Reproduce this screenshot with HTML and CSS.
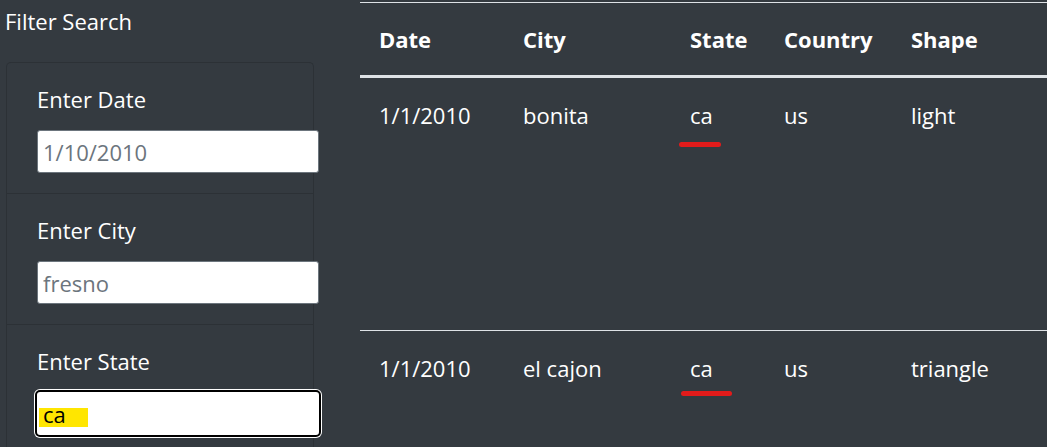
FILE: index.html
```html
<!DOCTYPE html>
<html lang="en">
<head>
<meta charset="utf-8">
<title>UFO Sightings</title>
<link rel="stylesheet" href="styles.css">
</head>
<body>
<div class="layout">
  <aside class="filters">
    <h2 class="filters-title">Filter Search</h2>
    <ul class="filter-list">
      <li class="filter-item">
        <label class="filter-label" for="date">Enter Date</label>
        <input class="filter-input" id="date" type="text" placeholder="1/10/2010">
      </li>
      <li class="filter-item">
        <label class="filter-label" for="city">Enter City</label>
        <input class="filter-input" id="city" type="text" placeholder="fresno">
      </li>
      <li class="filter-item">
        <label class="filter-label" for="state">Enter State</label>
        <input class="filter-input filter-input-focus" id="state" type="text" value="ca">
      </li>
    </ul>
  </aside>
  <main class="results">
    <table class="ufo-table">
      <colgroup>
        <col class="c-date"><col class="c-city"><col class="c-state"><col class="c-country"><col class="c-shape">
      </colgroup>
      <thead>
        <tr><th>Date</th><th>City</th><th>State</th><th>Country</th><th>Shape</th></tr>
      </thead>
      <tbody>
        <tr class="row-tall">
          <td>1/1/2010</td><td>bonita</td><td><span class="mark mark-a">ca</span></td><td>us</td><td>light</td>
        </tr>
        <tr class="row-tall">
          <td>1/1/2010</td><td>el cajon</td><td><span class="mark mark-b">ca</span></td><td>us</td><td>triangle</td>
        </tr>
      </tbody>
    </table>
  </main>
</div>
</body>
</html>
```
FILE: styles.css
```css
* { box-sizing: border-box; }
html, body {
  margin: 0;
  padding: 0;
  background: #343a40;
  color: #ffffff;
  font-family: "Open Sans", "Noto Sans", sans-serif;
  overflow: hidden;
  height: 447px;
}
.layout {
  display: grid;
  grid-template-columns: 360px 1fr;
  width: 1047px;
}
.filters {
  padding: 0 0 0 5px;
}
.filters-title {
  margin: 0;
  font-size: 22px;
  font-weight: 400;
  line-height: 30px;
  padding-top: 6px;
  height: 62px;
}
.filter-list {
  list-style: none;
  margin: 0 0 0 1px;
  padding: 0;
  width: 308px;
  border: 1px solid #2c3136;
  border-bottom: none;
  border-radius: 5px 5px 0 0;
}
.filter-item {
  padding: 21px 0 19px 30px;
  border-bottom: 1px solid #2c3136;
  height: 131px;
}
.filter-label {
  display: block;
  font-size: 22px;
  line-height: 30px;
  margin-bottom: 16px;
}
.filter-input {
  display: block;
  width: 282px;
  height: 43px;
  padding: 0 5px;
  border: 1px solid #6c757d;
  border-radius: 3px;
  background: #ffffff;
  font-family: "Open Sans", "Noto Sans", sans-serif;
  font-size: 22px;
  color: #000000;
}
.filter-input::placeholder { color: #6c757d; opacity: 1; }
.filter-input-focus {
  outline: 2px solid #000000;
  box-shadow: 0 0 0 3px #ffffff;
  border-color: #ffffff;
  background: linear-gradient(#ffe600, #ffe600) 1px 15px / 49px 19px no-repeat, #ffffff;
}
.results {
  padding-top: 2px;
}
.ufo-table {
  width: 100%;
  border-collapse: collapse;
  table-layout: fixed;
  border-top: 1px solid #dee2e6;
  font-size: 22px;
}
.c-date { width: 144px; }
.c-city { width: 167px; }
.c-state { width: 94px; }
.c-country { width: 127px; }
.ufo-table th {
  text-align: left;
  font-weight: 700;
  line-height: 30px;
  padding: 21px 19px 21px;
  border-bottom: 3px solid #dee2e6;
}
.ufo-table td {
  vertical-align: top;
  line-height: 30px;
  padding: 22px 19px 0;
  border-bottom: 1px solid #dee2e6;
}
.row-tall { height: 254px; }
.mark { position: relative; }
.mark::after {
  content: "";
  position: absolute;
  height: 5px;
  border-radius: 3px;
  background: #e21b1b;
}
.mark-a::after { left: -11px; width: 42px; top: 42px; }
.mark-b::after { left: -9px; width: 51px; top: 38px; }
```
